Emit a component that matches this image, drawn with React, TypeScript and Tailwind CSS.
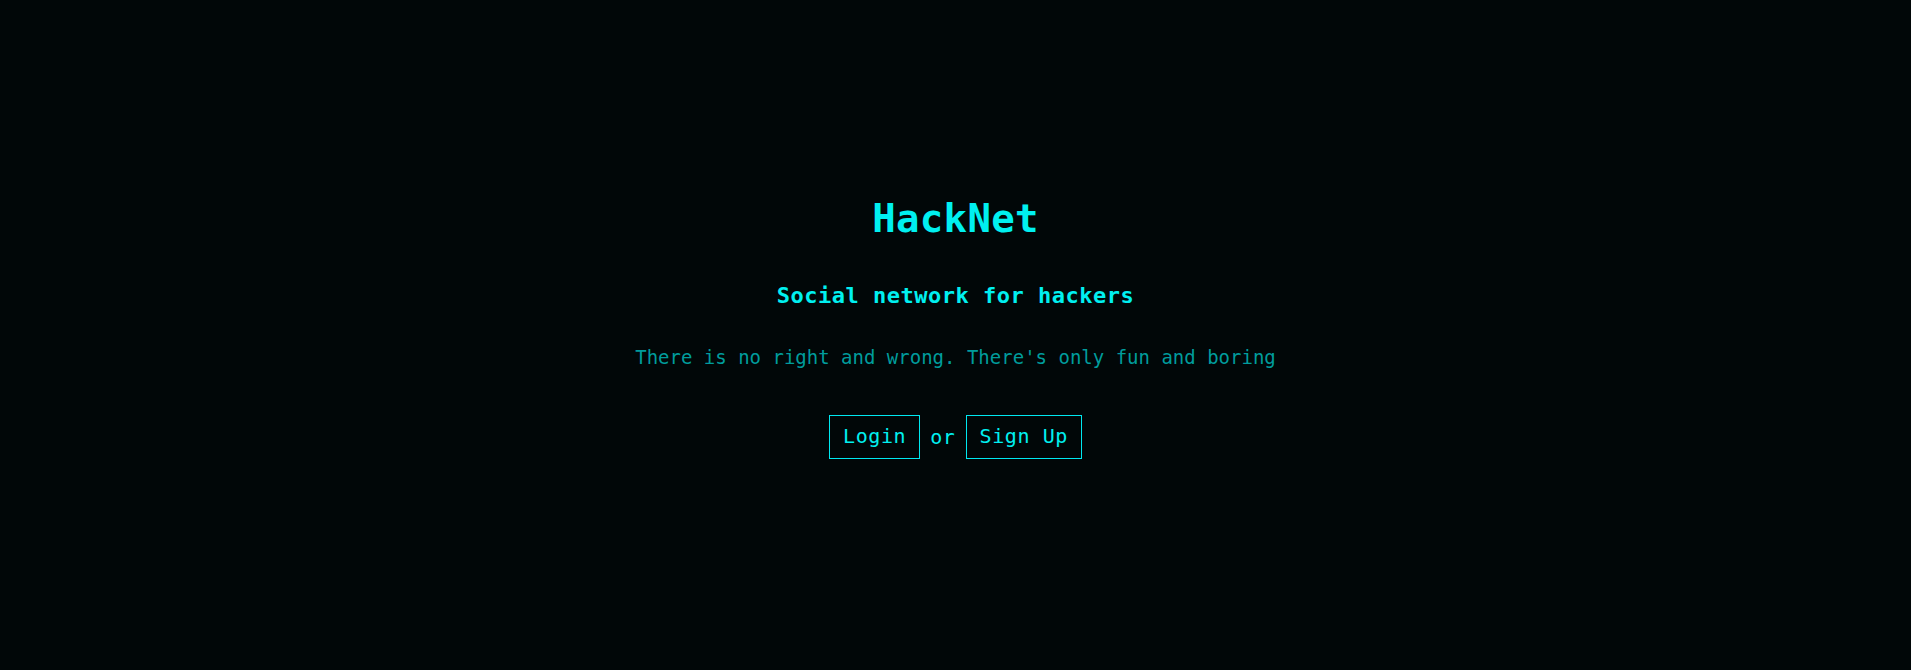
export default function App() {
  return (
    <div className="min-h-screen bg-[#010708] text-[#00f0f0] font-['DejaVu_Sans_Mono',monospace]">
      {/* Landing */}
      <main className="flex flex-col items-center pt-[199px]">
        <h1 className="text-[39px] leading-none font-bold tracking-[0.3px]">HackNet</h1>
        <h2 className="mt-[47px] text-[22px] leading-none font-bold tracking-[0.5px]">
          Social network for hackers
        </h2>
        <p className="mt-[41px] text-[19px] leading-none text-[#009c9c]">
          There is no right and wrong. There's only fun and boring
        </p>
        <div className="mt-[48px] flex items-center gap-[10px] text-[20px] leading-none tracking-[0.6px]">
          <button className="border border-[#00e8f0] px-[13px] pt-[10px] pb-[12px] leading-none">
            Login
          </button>
          <span>or</span>
          <button className="border border-[#00e8f0] px-[13px] pt-[10px] pb-[12px] leading-none">
            Sign Up
          </button>
        </div>
      </main>
    </div>
  );
}
